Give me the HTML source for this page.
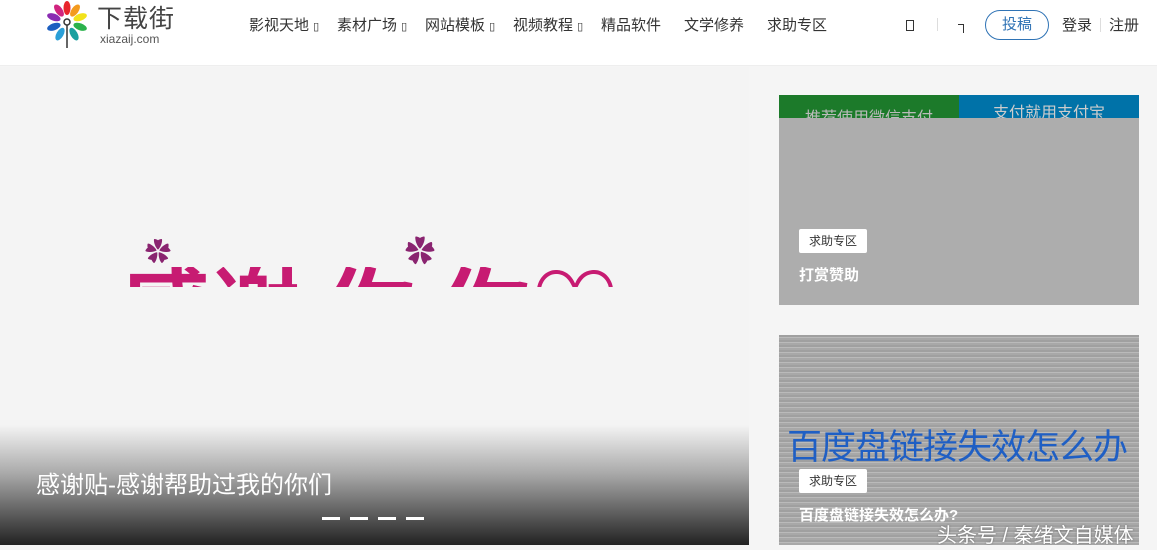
<!DOCTYPE html>
<html><head><meta charset="utf-8"><style>
*{margin:0;padding:0;box-sizing:border-box}
body{width:1157px;height:550px;overflow:hidden;background:#f5f5f5;font-family:"Liberation Sans","Noto Sans CJK SC",sans-serif;position:relative}
.hdr{position:absolute;left:0;top:0;width:1157px;height:66px;background:#fff;border-bottom:1px solid #eee}
.nav{position:absolute;top:14px;font-size:15px;color:#333;white-space:nowrap}
.a{position:absolute}
.tag{position:absolute;background:#fff;color:#333;font-size:12px;width:68px;height:24px;line-height:24px;text-align:center;border-radius:2px}
</style></head><body>
<div class="hdr">
<svg class="a" style="left:44px;top:0" width="48" height="50" viewBox="0 0 48 50">
<g transform="translate(23,22)">
<ellipse rx="3.5" ry="7" transform="rotate(0) translate(0,-14)" fill="#e8252b"/>
<ellipse rx="3.5" ry="7" transform="rotate(35) translate(0,-14)" fill="#f39a1e"/>
<ellipse rx="3.5" ry="7" transform="rotate(70) translate(0,-14)" fill="#f2e21b"/>
<ellipse rx="3.5" ry="7" transform="rotate(110) translate(0,-14)" fill="#2bb24c"/>
<ellipse rx="3.5" ry="7" transform="rotate(150) translate(0,-14)" fill="#1aa0a0"/>
<ellipse rx="3.5" ry="7" transform="rotate(210) translate(0,-14)" fill="#2a9fd8"/>
<ellipse rx="3.5" ry="7" transform="rotate(250) translate(0,-14)" fill="#1c5fc0"/>
<ellipse rx="3.5" ry="7" transform="rotate(290) translate(0,-14)" fill="#8a2bb2"/>
<ellipse rx="3.5" ry="7" transform="rotate(325) translate(0,-14)" fill="#d0237f"/>
<circle r="3" fill="none" stroke="#333" stroke-width="1.5"/>
<line x1="0" y1="3" x2="0" y2="26" stroke="#333" stroke-width="1.5"/>
</g></svg>
<div class="a" style="left:97px;top:-1px;font-size:25px;color:#444;letter-spacing:1px">下载街</div>
<div class="a" style="left:100px;top:32px;font-size:12px;color:#555">xiazaij.com</div>
<div class="nav" style="left:249px">影视天地 <span style="font-size:11px">▯</span></div>
<div class="nav" style="left:337px">素材广场 <span style="font-size:11px">▯</span></div>
<div class="nav" style="left:425px">网站模板 <span style="font-size:11px">▯</span></div>
<div class="nav" style="left:513px">视频教程 <span style="font-size:11px">▯</span></div>
<div class="nav" style="left:601px">精品软件</div>
<div class="nav" style="left:684px">文学修养</div>
<div class="nav" style="left:767px">求助专区</div>
<div class="a" style="left:906px;top:20px;width:8px;height:11px;border:1px solid #333"></div>
<div class="a" style="left:937px;top:18px;width:1px;height:13px;background:#ddd"></div>
<div class="a" style="left:958px;top:24px;width:6px;height:9px;border-top:1px solid #333;border-right:1px solid #333"></div>
<div class="a" style="left:985px;top:10px;width:64px;height:30px;border:1px solid #2f73b5;border-radius:15px;color:#2f73b5;font-size:15px;text-align:center;line-height:28px">投稿</div>
<div class="nav" style="left:1062px">登录</div>
<div class="a" style="left:1100px;top:18px;width:1px;height:14px;background:#ddd"></div>
<div class="nav" style="left:1109px">注册</div>
</div>
<div class="a" style="left:0;top:67px;width:749px;height:478px;background:#f4f4f4;overflow:hidden">
<div class="a" style="left:120px;top:200px;width:520px;height:20px;overflow:hidden;color:#c71b72;font-size:90px;font-weight:bold;line-height:1;white-space:nowrap">
<div style="position:absolute;top:0">感谢 你 你♡</div></div>
<div class="a" style="left:145px;top:165px;color:#8a2470;font-size:26px">✿</div>
<div class="a" style="left:405px;top:160px;color:#8a2470;font-size:30px">✿</div>
<div class="a" style="left:0;top:358px;width:749px;height:120px;background:linear-gradient(#f4f4f4,#aaa 40%,#222)"></div>
<div class="a" style="left:36px;top:398px;font-size:24px;color:#fff">感谢贴-感谢帮助过我的你们</div>
<div class="a" style="left:322px;top:450px;width:18px;height:3px;background:#fff"></div>
<div class="a" style="left:350px;top:450px;width:18px;height:3px;background:#fff"></div>
<div class="a" style="left:378px;top:450px;width:18px;height:3px;background:#fff"></div>
<div class="a" style="left:406px;top:450px;width:18px;height:3px;background:#fff"></div>
</div>
<div class="a" style="left:779px;top:95px;width:360px;height:210px;background:#adadad;overflow:hidden">
<div class="a" style="left:0;top:0;width:180px;height:23px;background:#1c7a2a;color:#bbb;font-size:16px;text-align:center;line-height:48px;overflow:hidden">推荐使用微信支付</div>
<div class="a" style="left:180px;top:0;width:180px;height:23px;background:#0072a8;color:#ccc;font-size:16px;text-align:center;line-height:38px;overflow:hidden">支付就用支付宝</div>
<div class="tag" style="left:20px;top:134px">求助专区</div>
<div class="a" style="left:20px;top:169px;font-size:15px;color:#fff;font-weight:bold">打赏赞助</div>
</div>
<div class="a" style="left:779px;top:335px;width:360px;height:210px;background:repeating-linear-gradient(#a0a0a0 0 2px,#bababa 2px 3px,#a8a8a8 3px 5px);overflow:hidden">
<div class="a" style="left:8px;top:84px;font-size:35px;color:#1f5fc4;white-space:nowrap;letter-spacing:-1px">百度盘链接失效怎么办</div>
<div class="tag" style="left:20px;top:134px">求助专区</div>
<div class="a" style="left:20px;top:169px;font-size:15px;color:#fff;font-weight:bold">百度盘链接失效怎么办?</div>
<div class="a" style="left:158px;top:184px;font-size:20px;color:#fff;white-space:nowrap;text-shadow:0 0 2px #666">头条号 / 秦绪文自媒体</div>
</div>
</body></html>
